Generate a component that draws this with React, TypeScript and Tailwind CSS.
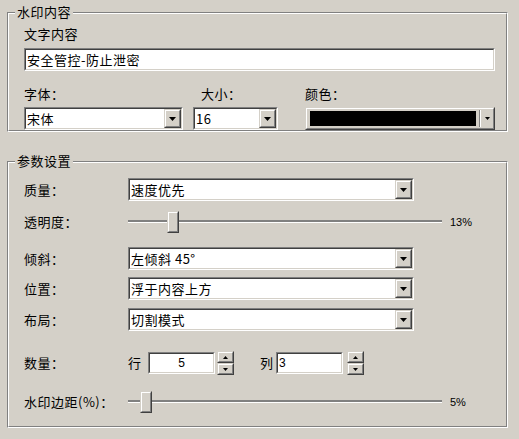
import React from 'react';

const FONT = { fontFamily: '"Noto Sans CJK SC", "Liberation Sans", sans-serif' };

function Arrow({ small = false }: { small?: boolean }) {
    return small ? (
        <svg width="5" height="3" viewBox="0 0 5 3">
            <path d="M0 0h5L2.5 3z" fill="#000" />
        </svg>
    ) : (
        <svg width="7" height="4" viewBox="0 0 7 4">
            <path d="M0 0h7L3.5 4z" fill="#000" />
        </svg>
    );
}

function Raised({ className = '', children }: { className?: string; children?: React.ReactNode }) {
    return (
        <div className={`border border-t-[#d4d0c8] border-l-[#d4d0c8] border-r-[#404040] border-b-[#404040] bg-[#d4d0c8] ${className}`}>
            <div className="flex h-full items-center justify-center border border-t-white border-l-white border-r-[#808080] border-b-[#808080]">
                {children}
            </div>
        </div>
    );
}

function Sunken({ className = '', children }: { className?: string; children?: React.ReactNode }) {
    return (
        <div className={`border border-t-[#808080] border-l-[#808080] border-r-white border-b-white ${className}`}>
            <div className="flex h-full items-center border border-t-[#404040] border-l-[#404040] border-r-[#d4d0c8] border-b-[#d4d0c8] bg-white">
                {children}
            </div>
        </div>
    );
}

function Combo({ value, className = '' }: { value: string; className?: string }) {
    return (
        <Sunken className={`h-[23px] ${className}`}>
            <span className="flex-1 whitespace-nowrap pl-[1px] text-[13px] leading-[16px] tracking-[0.5px] text-black">{value}</span>
            <Raised className="h-full w-[17px] shrink-0">
                <Arrow />
            </Raised>
        </Sunken>
    );
}

function Spin({ value, center = false, width }: { value: string; center?: boolean; width: string }) {
    return (
        <Sunken className={`h-[22px] ${width}`}>
            <span
                className={`flex-1 text-[12px] leading-[14px] text-black ${center ? 'text-center' : 'pl-[1px]'}`}
                style={{ fontFamily: '"Liberation Sans", sans-serif' }}
            >
                {value}
            </span>
        </Sunken>
    );
}

function SpinButtons({ className = '' }: { className?: string }) {
    return (
        <div className={`flex h-[24px] w-[17px] flex-col ${className}`}>
            <Raised className="h-[12px] w-full">
                <svg width="5" height="3" viewBox="0 0 5 3">
                    <path d="M2.5 0L5 3H0z" fill="#000" />
                </svg>
            </Raised>
            <Raised className="h-[12px] w-full">
                <Arrow small />
            </Raised>
        </div>
    );
}

function Slider({ pos, value }: { pos: number; value: string }) {
    return (
        <div className="flex h-[22px] items-center">
            <div className="relative h-[22px] w-[314px]">
                <div className="absolute left-0 right-0 top-[9px] h-[3px] border-t-2 border-b border-t-[#808080] border-b-white" />
                <div className="absolute top-0" style={{ left: pos }}>
                    <Raised className="h-[22px] w-[12px]" />
                </div>
            </div>
            <span className="ml-[8px] text-[11px] leading-[14px] text-black" style={{ fontFamily: '"Liberation Sans", sans-serif' }}>
                {value}
            </span>
        </div>
    );
}

function Group({ title, className = '', children }: { title: string; className?: string; children: React.ReactNode }) {
    return (
        <div className={`relative ml-[7px] w-[501px] border border-t-[#808080] border-l-[#808080] border-r-white border-b-white ${className}`}>
            <div className="h-full border border-t-white border-l-white border-r-[#808080] border-b-[#808080]">{children}</div>
            <span className="absolute left-[7px] top-[-9px] bg-[#d4d0c8] px-[2px] text-[13px] leading-[16px] tracking-[0.5px] text-black">
                {title}
            </span>
        </div>
    );
}

function Row({ label, className = '', children }: { label: string; className?: string; children: React.ReactNode }) {
    return (
        <div className={`flex items-center ${className}`}>
            <span className="w-[104px] whitespace-nowrap text-[13px] leading-[16px] tracking-[0.5px] text-black">{label}</span>
            {children}
        </div>
    );
}

export default function App() {
    return (
        <div className="h-[439px] w-[519px] overflow-hidden bg-[#d4d0c8] pt-[12px]" style={FONT}>
            <Group title="水印内容" className="h-[120px]">
                <div className="pl-[15px]">
                    <div className="pt-[12px] text-[13px] leading-[16px] tracking-[0.5px] text-black">文字内容</div>
                    <Sunken className="mt-[6px] h-[23px] w-[471px]">
                        <span className="pl-[1px] text-[13px] leading-[16px] tracking-[0.5px] text-black">安全管控-防止泄密</span>
                    </Sunken>
                    <div className="mt-[15px] flex text-[13px] leading-[16px] tracking-[0.5px] text-black">
                        <span className="w-[177px]">字体：</span>
                        <span className="w-[104px]">大小：</span>
                        <span>颜色：</span>
                    </div>
                    <div className="mt-[5px] flex">
                        <Combo value="宋体" className="w-[159px]" />
                        <Combo value="16" className="ml-[10px] w-[85px]" />
                        <Raised className="ml-[27px] h-[23px] w-[190px]">
                            <div className="flex h-full w-full items-center">
                                <div className="ml-[3px] h-[15px] flex-1 bg-black" />
                                <div className="ml-[3px] h-[17px] w-[2px] border-l border-r border-l-[#808080] border-r-white" />
                                <div className="flex w-[12px] justify-center">
                                    <Arrow small />
                                </div>
                            </div>
                        </Raised>
                    </div>
                </div>
            </Group>

            <Group title="参数设置" className="mt-[29px] h-[267px]">
                <div className="pl-[15px]">
                    <Row label="质量：" className="mt-[15px]">
                        <Combo value="速度优先" className="w-[286px]" />
                    </Row>
                    <Row label="透明度：" className="mt-[10px]">
                        <Slider pos={39} value="13%" />
                    </Row>
                    <Row label="倾斜：" className="mt-[14px]">
                        <Combo value="左倾斜 45°" className="w-[286px]" />
                    </Row>
                    <Row label="位置：" className="mt-[7px]">
                        <Combo value="浮于内容上方" className="w-[286px]" />
                    </Row>
                    <Row label="布局：" className="mt-[8px]">
                        <Combo value="切割模式" className="w-[286px]" />
                    </Row>
                    <Row label="数量：" className="mt-[20px]">
                        <span className="w-[20px] text-[13px] leading-[16px] text-black">行</span>
                        <Spin value="5" center width="w-[67px]" />
                        <SpinButtons className="ml-[2px]" />
                        <span className="ml-[26px] w-[16px] text-[13px] leading-[16px] text-black">列</span>
                        <Spin value="3" width="w-[67px]" />
                        <SpinButtons className="ml-[4px]" />
                    </Row>
                    <Row label="水印边距(%)：" className="mt-[16px]">
                        <Slider pos={12} value="5%" />
                    </Row>
                </div>
            </Group>
        </div>
    );
}
